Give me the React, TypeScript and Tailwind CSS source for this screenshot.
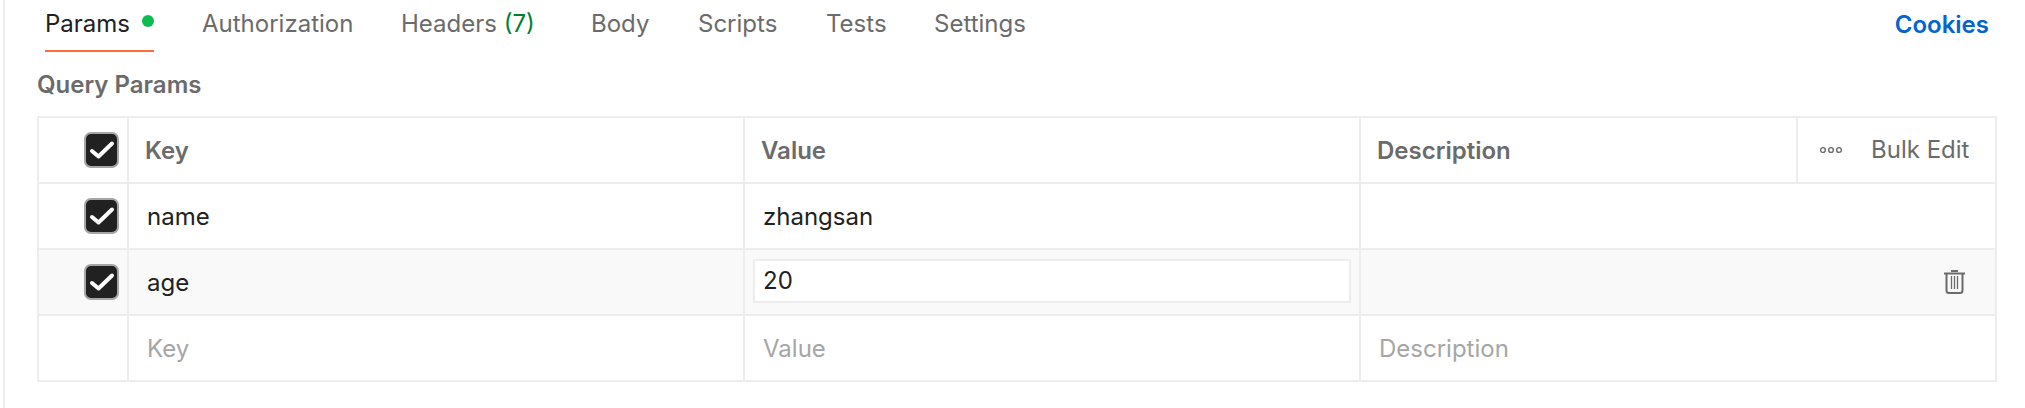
const tabs = [
  { label: 'Authorization', width: 'w-[199px]' },
  { label: 'Headers', count: '(7)', width: 'w-[190px]' },
  { label: 'Body', width: 'w-[107px]' },
  { label: 'Scripts', width: 'w-[128px]' },
  { label: 'Tests', width: 'w-[108px]' },
  { label: 'Settings', width: 'w-[110px]' },
];

const Checkbox = () => (
  <span className="flex h-[36px] w-[35px] items-center justify-center rounded-[7px] border-2 border-[#a6a6a6] bg-[#212121]">
    <svg width="26" height="20" viewBox="0 0 26 20" fill="none">
      <path d="M3 11 L9.5 16.5 L23 3.5" stroke="#fff" strokeWidth="4" strokeLinecap="round" strokeLinejoin="round" />
    </svg>
  </span>
);

const TrashIcon = () => (
  <svg width="21" height="24" viewBox="0 0 21 24" fill="none" stroke="#6b6b6b">
    <path d="M7 1 H14" strokeWidth="2" />
    <path d="M0 3.5 H21" strokeWidth="2" />
    <path d="M2.5 4 V20.5 Q2.5 23 5 23 H16 Q18.5 23 18.5 20.5 V4" strokeWidth="2" />
    <path d="M7.5 6 V19 M10.5 6 V19 M13.5 6 V19" strokeWidth="1.3" />
  </svg>
);

const rowClass = 'grid h-[66px] grid-cols-[90px_616px_616px_1fr] border-b-2 border-[#ededed]';
const cellClass = 'flex items-center border-r-2 border-[#ededed]';
const textCell = 'flex items-center border-r-2 border-[#ededed] pl-[18px] pt-[2px]';
const headCell = 'flex items-center border-r-2 border-[#ededed] pl-[16px] pt-[2px]';

export default function App() {
  return (
    <div className="h-[408px] w-[2025px] overflow-hidden bg-white font-['Inter',sans-serif]">
      <div className="ml-[3px] h-full border-l-2 border-[#ededed] pl-[32px]">
        {/* Tabs */}
        <div className="flex h-[52px] items-start pr-[6px] text-[24px] text-[#6b6b6b]">
          <div className="ml-[8px] mr-[48px] flex h-[52px] w-[109px] items-start gap-[12px] border-b-2 border-[#ff6c37] pt-[6px] text-[#212121]">
            <span className="shrink-0">Params</span>
            <span className="mt-[9px] h-[12px] w-[12px] shrink-0 rounded-full bg-[#0cbb52]" />
          </div>
          {tabs.map((t) => (
            <div key={t.label} className={`pt-[6px] ${t.width}`}>
              {t.label}
              {t.count && <span className="text-[#007f31]"> {t.count}</span>}
            </div>
          ))}
          <div className="ml-auto mr-[30px] pt-[7px] font-semibold text-[#0265d2]">Cookies</div>
        </div>

        <div className="flex h-[64px] items-start pt-[15px] text-[24px] font-semibold text-[#6b6b6b]">Query Params</div>

        {/* Params table */}
        <div className="w-[1960px] border-x-2 border-t-2 border-[#ededed] text-[24px]">
          <div className="grid h-[66px] grid-cols-[90px_616px_616px_437px_1fr] border-b-2 border-[#ededed] font-semibold text-[#6b6b6b]">
            <div className={`${cellClass} justify-end pr-[8px]`}><Checkbox /></div>
            <div className={headCell}>Key</div>
            <div className={headCell}>Value</div>
            <div className={headCell}>Description</div>
            <div className="flex items-center pl-[22px] font-normal">
              <svg width="22" height="8" viewBox="0 0 22 8" fill="none" stroke="#6b6b6b" strokeWidth="1.4">
                <circle cx="3" cy="4" r="2.4" />
                <circle cx="11" cy="4" r="2.4" />
                <circle cx="19" cy="4" r="2.4" />
              </svg>
              <span className="ml-[29px]">Bulk Edit</span>
            </div>
          </div>

          <div className={`${rowClass} text-[#212121]`}>
            <div className={`${cellClass} justify-end pr-[8px]`}><Checkbox /></div>
            <div className={textCell}>name</div>
            <div className={textCell}>zhangsan</div>
            <div />
          </div>

          <div className={`${rowClass} bg-[#f9f9f9] text-[#212121]`}>
            <div className={`${cellClass} justify-end pr-[8px]`}><Checkbox /></div>
            <div className={textCell}>age</div>
            <div className="border-r-2 border-[#ededed] px-[8px] pt-[9px]">
              <div className="flex h-[44px] w-full items-center border-2 border-[#ededed] bg-white pl-[8px]">20</div>
            </div>
            <div className="flex items-center justify-end pr-[30px]"><TrashIcon /></div>
          </div>

          <div className={`${rowClass} text-[#a6a6a6]`}>
            <div className={cellClass} />
            <div className={textCell}>Key</div>
            <div className={textCell}>Value</div>
            <div className="flex items-center pl-[18px] pt-[2px]">Description</div>
          </div>
        </div>
      </div>
    </div>
  );
}
